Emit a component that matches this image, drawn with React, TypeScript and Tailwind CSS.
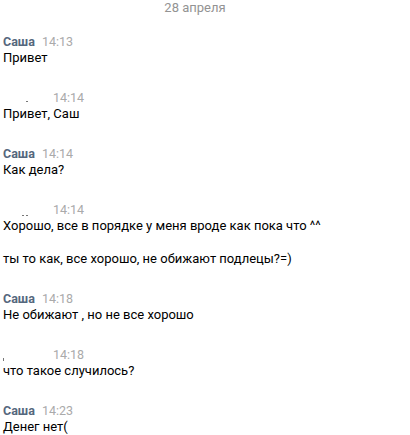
import React from "react";

type Msg = { me: boolean; time: string; lines: string[]; marks?: { x: number; y: number; w: number; h: number }[] };

const msgs: Msg[] = [
  { me: false, time: "14:13", lines: ["Привет"] },
  { me: true, time: "14:14", lines: ["Привет, Саш"], marks: [{ x: 23, y: 11, w: 2, h: 1 }] },
  { me: false, time: "14:14", lines: ["Как дела?"] },
  {
    me: true,
    time: "14:14",
    lines: ["Хорошо, все в порядке у меня вроде как пока что ^^", "", "ты то как, все хорошо, не обижают подлецы?=)"],
    marks: [
      { x: 19, y: 13, w: 2, h: 1 },
      { x: 23, y: 13, w: 2, h: 1 },
    ],
  },
  { me: false, time: "14:18", lines: ["Не обижают , но не все хорошо"] },
  { me: true, time: "14:18", lines: ["что такое случилось?"], marks: [{ x: 0, y: 11, w: 1, h: 3 }] },
  { me: false, time: "14:23", lines: ["Денег нет("] },
];

export default function App() {
  return (
    <div
      className="w-[410px] h-[435px] bg-white overflow-hidden text-[13px] text-black"
      style={{ fontFamily: "Roboto, 'Open Sans', Arial, sans-serif" }}
    >
      <div className="text-center text-[#939393] leading-[16px] pr-[20px]">28 апреля</div>
      <div className="pl-[3px] pt-[18px] flex flex-col gap-[23.5px]">
        {msgs.map((m, i) => (
          <div key={i} className="flex flex-col">
            <div className="flex items-center h-[16px] leading-[16px]">
              {m.me ? (
                <span className="w-[50px] relative h-[16px] shrink-0">
                  {m.marks?.map((k, j) => (
                    <span
                      key={j}
                      className="absolute bg-[#777]"
                      style={{ left: k.x, top: k.y, width: k.w, height: k.h }}
                    />
                  ))}
                </span>
              ) : (
                <span className="font-bold text-[#55677d] text-[12.5px] mr-[7px]">Саша</span>
              )}
              <span className="text-[#aaaaaa] text-[12.5px]">{m.time}</span>
            </div>
            {m.lines.map((l, j) => (
              <div key={j} className="leading-[16.5px] h-[16.5px]">
                {l}
              </div>
            ))}
          </div>
        ))}
      </div>
    </div>
  );
}
